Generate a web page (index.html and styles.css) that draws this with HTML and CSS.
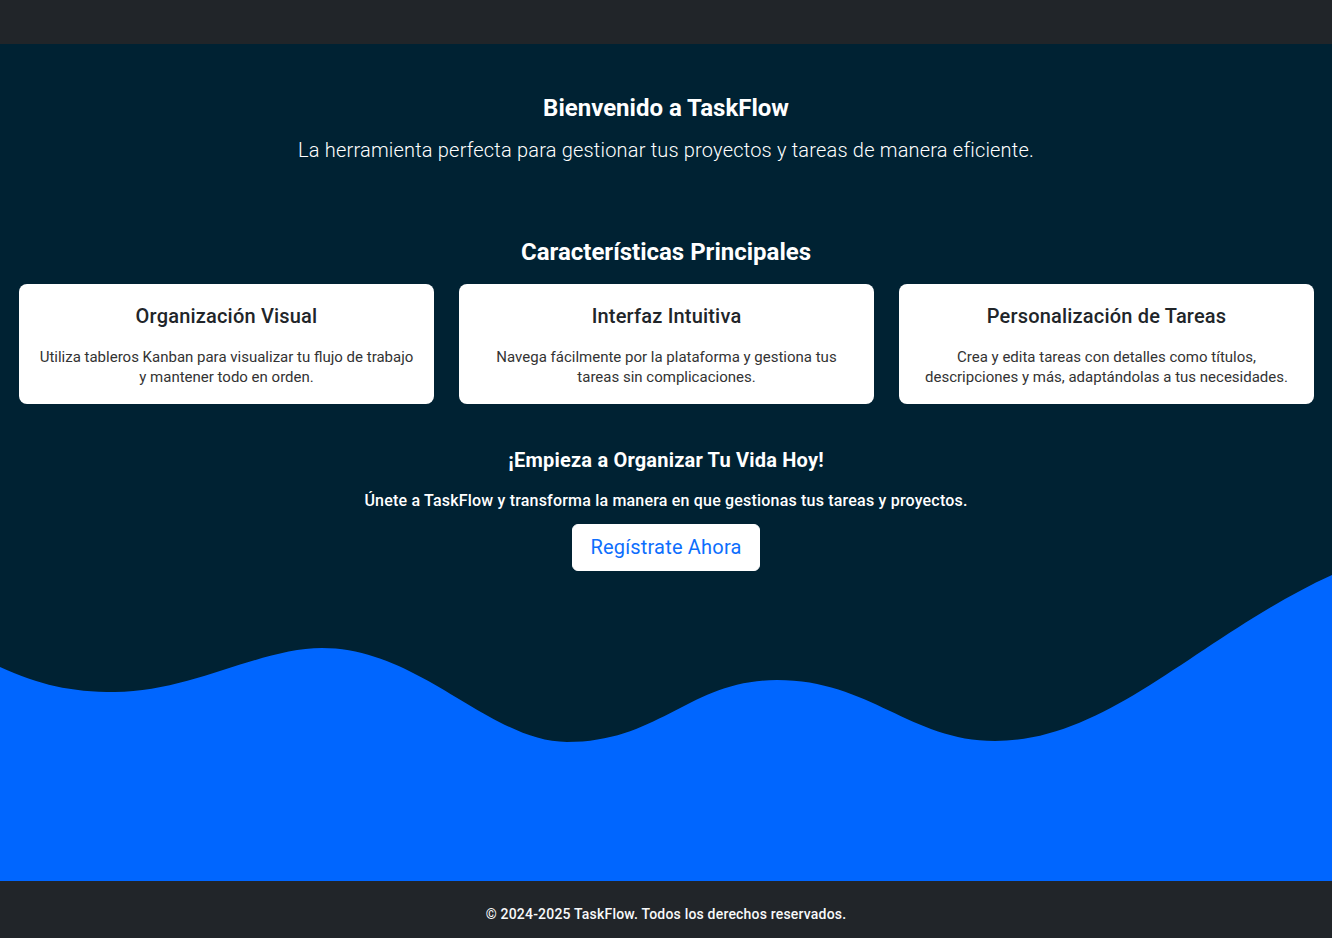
FILE: index.html
```html
<!DOCTYPE html>
<html lang="es">
<head>
<meta charset="utf-8">
<title>TaskFlow</title>
<link rel="stylesheet" href="styles.css">
</head>
<body>
<nav class="topbar"></nav>
<main class="main">
  <section class="hero">
    <h1 class="hero-title">Bienvenido a TaskFlow</h1>
    <p class="hero-lead">La herramienta perfecta para gestionar tus proyectos y tareas de manera eficiente.</p>
  </section>
  <section class="features">
    <h2 class="features-title">Características Principales</h2>
    <div class="cards">
      <div class="card">
        <h3 class="card-title">Organización Visual</h3>
        <p class="card-text">Utiliza tableros Kanban para visualizar tu flujo de trabajo y mantener todo en orden.</p>
      </div>
      <div class="card">
        <h3 class="card-title">Interfaz Intuitiva</h3>
        <p class="card-text">Navega fácilmente por la plataforma y gestiona tus tareas sin complicaciones.</p>
      </div>
      <div class="card">
        <h3 class="card-title">Personalización de Tareas</h3>
        <p class="card-text">Crea y edita tareas con detalles como títulos, descripciones y más, adaptándolas a tus necesidades.</p>
      </div>
    </div>
  </section>
  <section class="cta">
    <h4 class="cta-title">¡Empieza a Organizar Tu Vida Hoy!</h4>
    <p class="cta-text">Únete a TaskFlow y transforma la manera en que gestionas tus tareas y proyectos.</p>
    <a class="cta-btn" href="#">Regístrate Ahora</a>
  </section>
  <svg class="wave" viewBox="0 0 1332 306" preserveAspectRatio="none" xmlns="http://www.w3.org/2000/svg">
    <path fill="#0066ff" d="M0,92 C40,110 70,117 115,117 C190,117 260,73 322,73 C420,73 490,167 567,167 C660,167 690,105 777,105 C870,105 910,166 995,166 C1110,166 1200,60 1332,0 L1332,306 L0,306 Z"/>
  </svg>
</main>
<footer class="footer">
  <p class="footer-text">© 2024-2025 TaskFlow. Todos los derechos reservados.</p>
</footer>
</body>
</html>
```

FILE: styles.css
```css
* { box-sizing: border-box; }
html, body { margin: 0; padding: 0; }
body {
  font-family: Roboto, "Liberation Sans", Arial, sans-serif;
  background: #002233;
  color: #fff;
  letter-spacing: 0.012em;
}
.topbar {
  height: 44px;
  background: #212529;
}
.main {
  background: #002233;
  display: flex;
  flex-direction: column;
}
.hero {
  padding-top: 50px;
  text-align: center;
}
.hero-title {
  margin: 0;
  font-size: 24px;
  line-height: 29px;
  font-weight: 700;
  letter-spacing: 0;
}
.hero-lead {
  margin: 12px 0 0;
  font-size: 20px;
  line-height: 30px;
  font-weight: 300;
}
.features {
  padding-top: 73px;
  text-align: center;
}
.features-title {
  margin: 0;
  font-size: 24px;
  line-height: 29px;
  font-weight: 700;
  letter-spacing: 0;
}
.cards {
  margin-top: 17px;
  padding: 0 18px 0 19px;
  display: grid;
  grid-template-columns: repeat(3, 1fr);
  gap: 25px;
}
.card {
  background: #fff;
  border-radius: 8px;
  height: 120px;
  padding: 20px 16px 0;
  color: #212529;
}
.card-title {
  margin: 0;
  font-size: 20px;
  line-height: 24px;
  font-weight: 500;
}
.card-text {
  margin: 19px 0 0;
  font-size: 15px;
  line-height: 20px;
  color: #333;
  letter-spacing: 0;
}
.cta {
  padding-top: 44px;
  text-align: center;
  display: flex;
  flex-direction: column;
  align-items: center;
}
.cta-title {
  margin: 0;
  font-size: 20px;
  line-height: 24px;
  font-weight: 700;
}
.cta-text {
  margin: 17px 0 0;
  font-size: 16px;
  line-height: 24px;
  font-weight: 500;
}
.cta-btn {
  margin-top: 11px;
  display: inline-block;
  background: #fff;
  color: #0d6efd;
  text-decoration: none;
  font-size: 20px;
  line-height: 29px;
  padding: 8px 17px;
  border: 1px solid #fff;
  border-radius: 6px;
}
.wave {
  display: block;
  margin-top: 4px;
  width: 100%;
  height: 306px;
}
.footer {
  background: #212529;
  padding: 23px 0 13px;
  text-align: center;
}
.footer-text {
  margin: 0;
  font-size: 14px;
  line-height: 21px;
  font-weight: 500;
  color: #f8f9fa;
}
```
